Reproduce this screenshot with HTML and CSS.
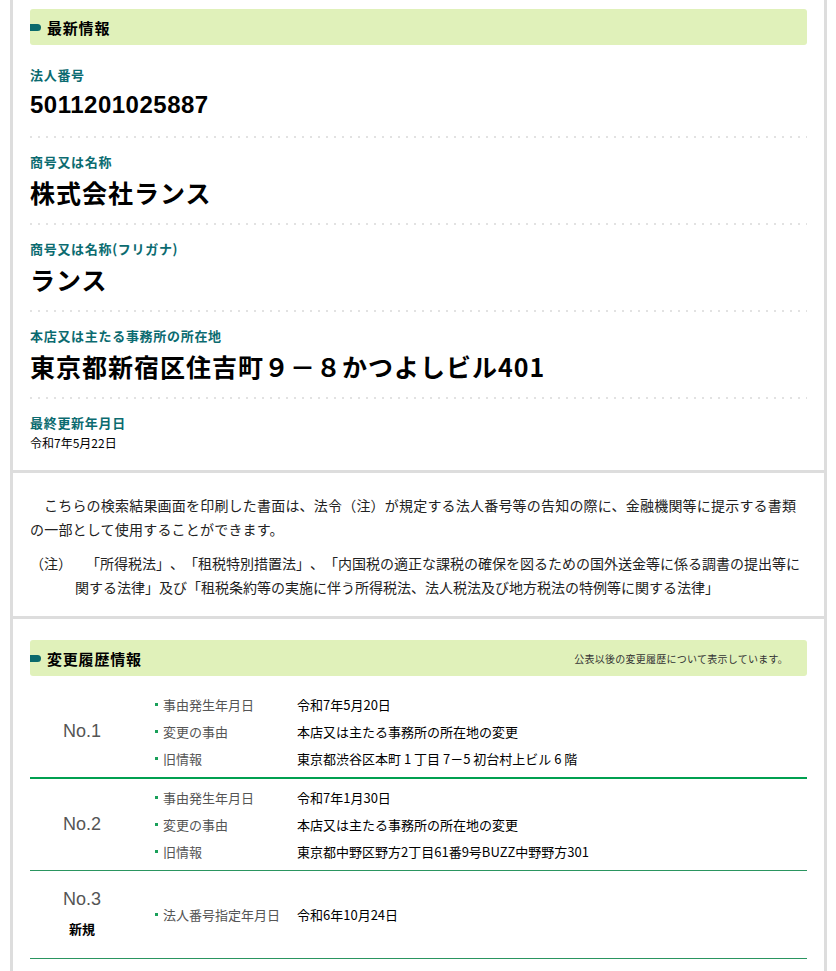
FILE: index.html
```html
<!DOCTYPE html>
<html lang="ja">
<head>
<meta charset="utf-8">
<title>法人番号 検索結果</title>
<link rel="stylesheet" href="styles.css">
</head>
<body>
<div class="page">
  <section class="sec sec-latest">
    <h2 class="sec-head"><span class="sec-title">最新情報</span></h2>
    <dl class="fields">
      <div class="field">
        <dt>法人番号</dt>
        <dd class="big num">5011201025887</dd>
      </div>
      <div class="field">
        <dt>商号又は名称</dt>
        <dd class="big">株式会社ランス</dd>
      </div>
      <div class="field">
        <dt>商号又は名称(フリガナ)</dt>
        <dd class="big">ランス</dd>
      </div>
      <div class="field">
        <dt>本店又は主たる事務所の所在地</dt>
        <dd class="big">東京都新宿区住吉町９－８かつよしビル401</dd>
      </div>
      <div class="field field-last">
        <dt>最終更新年月日</dt>
        <dd class="small">令和7年5月22日</dd>
      </div>
    </dl>
  </section>

  <section class="sec sec-notice">
    <p class="lead">こちらの検索結果画面を印刷した書面は、法令（注）が規定する法人番号等の告知の際に、金融機関等に提示する書類の一部として使用することができます。</p>
    <p class="note">（注）　「所得税法」、「租税特別措置法」、「内国税の適正な課税の確保を図るための国外送金等に係る調書の提出等に関する法律」及び「租税条約等の実施に伴う所得税法、法人税法及び地方税法の特例等に関する法律」</p>
  </section>

  <section class="sec sec-history">
    <h2 class="sec-head"><span class="sec-title">変更履歴情報</span><span class="sec-note">公表以後の変更履歴について表示しています。</span></h2>
    <div class="hist">
      <div class="hist-row hist-row-first">
        <div class="hist-no">No.1</div>
        <ul class="hist-items">
          <li><span class="k">事由発生年月日</span><span class="v">令和7年5月20日</span></li>
          <li><span class="k">変更の事由</span><span class="v">本店又は主たる事務所の所在地の変更</span></li>
          <li><span class="k">旧情報</span><span class="v">東京都渋谷区本町 1 丁目 7－5 初台村上ビル 6 階</span></li>
        </ul>
      </div>
      <div class="hist-row">
        <div class="hist-no">No.2</div>
        <ul class="hist-items">
          <li><span class="k">事由発生年月日</span><span class="v">令和7年1月30日</span></li>
          <li><span class="k">変更の事由</span><span class="v">本店又は主たる事務所の所在地の変更</span></li>
          <li><span class="k">旧情報</span><span class="v">東京都中野区野方2丁目61番9号BUZZ中野野方301</span></li>
        </ul>
      </div>
      <div class="hist-row hist-row-new">
        <div class="hist-no">No.3<span class="badge-new">新規</span></div>
        <ul class="hist-items">
          <li><span class="k">法人番号指定年月日</span><span class="v">令和6年10月24日</span></li>
        </ul>
      </div>
    </div>
  </section>
</div>
</body>
</html>
```

FILE: styles.css
```css
* { box-sizing: border-box; }

html, body {
  margin: 0;
  padding: 0;
  background: #fff;
}

body {
  font-family: "Noto Sans CJK JP", "Noto Sans", sans-serif;
  color: #000;
  font-size: 13px;
}

.page {
  margin: 0 9px 0 10px;
  border-left: 3px solid #dddddd;
  border-right: 3px solid #dddddd;
  min-height: 971px;
}

.sec {
  padding: 9px 17px 0;
}

.sec + .sec {
  border-top: 3px solid #dddddd;
}

/* section header bar */
.sec-head {
  margin: 0;
  height: 36px;
  display: flex;
  align-items: center;
  background: #e0f1ba;
  border-radius: 3px;
  padding-right: 19px;
}

.sec-head::before {
  content: "";
  width: 11px;
  height: 7px;
  background: #0a6a6c;
  border-radius: 0 4px 4px 0;
  margin-right: 6px;
  flex: none;
}

.sec-title {
  font-size: 15px;
  font-weight: 700;
  letter-spacing: 0.8px;
  color: #000;
}

.sec-note {
  margin-left: auto;
  font-size: 10px;
  font-weight: 400;
  letter-spacing: 0.25px;
  color: #333;
}

/* latest info fields */
.fields {
  margin: 6px 0 0;
}

.field {
  padding: 15px 0 18px;
  background-image: linear-gradient(to right, #e2e2e2 2px, transparent 2px);
  background-size: 8px 2px;
  background-repeat: repeat-x;
  background-position: left bottom;
}

.field-last {
  padding-bottom: 19px;
  background: none;
}

.field dt {
  font-size: 13px;
  line-height: 18px;
  font-weight: 700;
  color: #0b6b70;
  letter-spacing: 0.7px;
}

.field dd {
  margin: 0;
}

.field .big {
  margin-top: 6px;
  font-size: 25px;
  line-height: 30px;
  font-weight: 700;
  letter-spacing: 1px;
}

.field .num {
  font-family: "Liberation Sans", "Noto Sans CJK JP", sans-serif;
  font-size: 24px;
  letter-spacing: 0.5px;
}

.field .small {
  margin-top: 3px;
  font-size: 12px;
  line-height: 16px;
}

/* notice */
.sec-notice {
  padding: 20px 17px 17px;
  color: #222;
}

.lead,
.note {
  margin: 0;
  font-size: 14px;
  line-height: 24px;
  text-spacing-trim: space-all;
}

.lead {
  text-indent: 1em;
  letter-spacing: 0.2px;
}

.note {
  margin-top: 10px;
  padding-left: 45px;
  text-indent: -45px;
}

/* history */
.sec-history {
  padding-top: 21px;
}

.hist {
  margin-top: 10px;
}

.hist-row {
  display: grid;
  grid-template-columns: 104px 1fr;
  padding: 5px 0;
  border-bottom: 1px solid #2a9560;
}

.hist-row-first {
  border-bottom: 2px solid #00a050;
}

.hist-no {
  display: flex;
  flex-direction: column;
  align-items: center;
  justify-content: center;
  font-family: "Liberation Sans", sans-serif;
  font-size: 18px;
  color: #555;
}

.hist-row-new {
  padding: 13px 0 14px;
}

.hist-row-new .hist-no {
  line-height: 30px;
}

.badge-new {
  font-family: "Noto Sans CJK JP", sans-serif;
  font-size: 13px;
  font-weight: 700;
  color: #000;
  line-height: 30px;
}

.hist-items {
  list-style: none;
  margin: 0;
  padding: 0;
  align-self: center;
}

.hist-items li {
  display: grid;
  grid-template-columns: 163px 1fr;
  line-height: 27px;
  font-size: 13px;
}

.k {
  padding-left: 21px;
  color: #555;
  display: flex;
  align-items: center;
}

.k::before {
  content: "";
  width: 3px;
  height: 3px;
  background: #1aa05a;
  margin-right: 5px;
  flex: none;
}

.v {
  color: #000;
}
```
